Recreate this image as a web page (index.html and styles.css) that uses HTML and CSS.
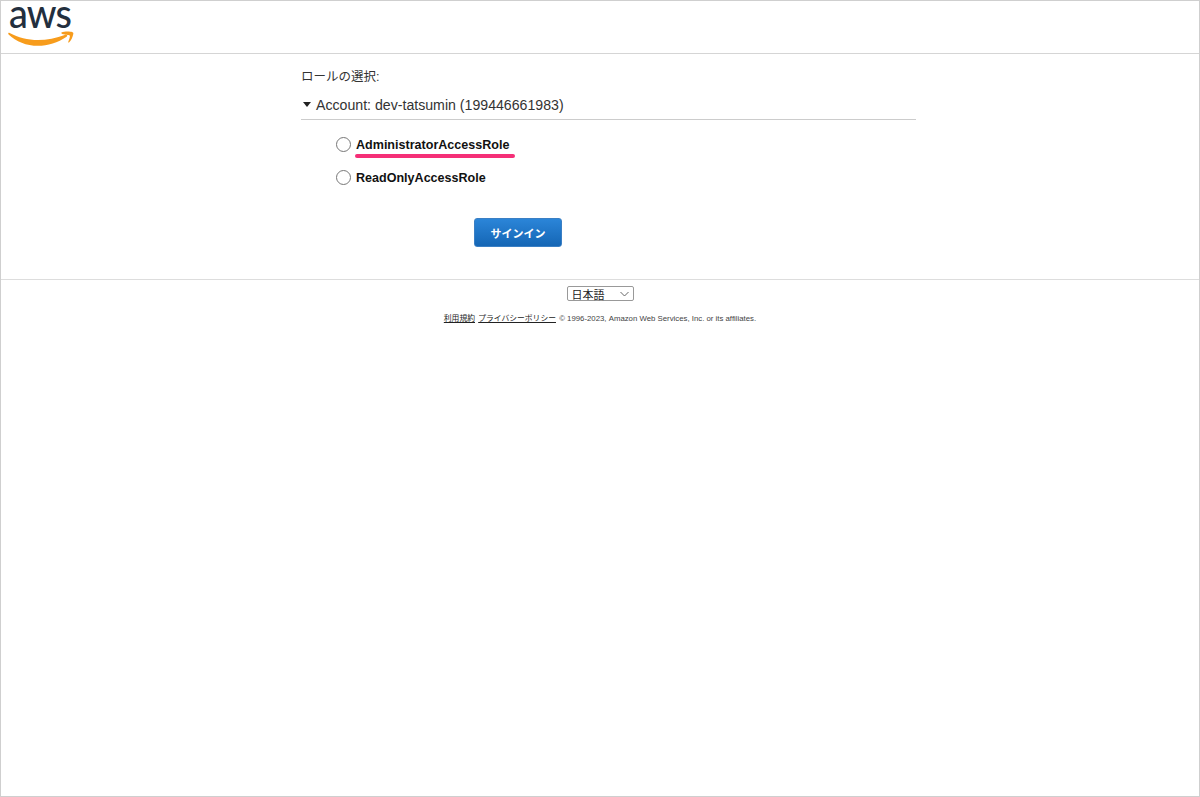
FILE: index.html
```html
<!DOCTYPE html>
<html lang="ja">
<head>
    <meta charset="UTF-8">
    <meta name="viewport" content="width=device-width, initial-scale=1.0">
    <title>Amazon Web Services Sign-In</title>
    <link rel="stylesheet" href="styles.css">
</head>
<body>
    <div class="frame">
        <div class="header">
            <div class="logo">
                <span class="logo-text">aws</span>
                <svg class="logo-smile" width="66" height="16" viewBox="0 0 66 16">
                    <path d="M0.3 2.2C0.6 1.7 1 1.7 1.6 2C10 6.6 20 9 30 9C39 9 48 7.4 57.5 3.8C59 3.2 60 4.6 58.6 5.7C50 11.6 39.5 14.8 30 14.8C18.5 14.8 8 10.4 0.6 3.4C0.2 3 0.1 2.6 0.3 2.2Z" fill="#f79c1c"/>
                    <path d="M53.5 1.6C56.5 0.2 62 0.4 64.5 1.2C65.3 1.5 65.5 2 65.3 3C64.7 6 63.2 9.6 61 11.4C60.5 11.8 60 11.6 60.2 11C61 8.8 62.4 5.4 61.7 4.5C61 3.6 57 4 54.2 2.9C53.4 2.6 53 2 53.5 1.6Z" fill="#f79c1c"/>
                </svg>
            </div>
        </div>
        <div class="content">
            <div class="form-title">ロールの選択:</div>
            <div class="account">
                <span class="arrow"></span>
                <span>Account: dev-tatsumin (199446661983)</span>
            </div>
            <div class="roles">
                <label class="role">
                    <span class="radio"></span>
                    <span class="role-name marked">AdministratorAccessRole</span>
                </label>
                <label class="role">
                    <span class="radio"></span>
                    <span class="role-name">ReadOnlyAccessRole</span>
                </label>
            </div>
            <div class="signin-row">
                <button class="signin" type="button">サインイン</button>
            </div>
        </div>
        <div class="footer">
            <div class="lang">
                <span>日本語</span>
                <svg width="9" height="6" viewBox="0 0 9 6"><path d="M0.5 1L4.5 5L8.5 1" fill="none" stroke="#666" stroke-width="1"/></svg>
            </div>
            <div class="legal">
                <a href="#">利用規約</a>
                <a href="#">プライバシーポリシー</a>
                <span>© 1996-2023, Amazon Web Services, Inc. or its affiliates.</span>
            </div>
        </div>
    </div>
</body>
</html>
```

FILE: styles.css
```css
* {
    box-sizing: border-box;
}
html, body {
    height: 100%;
}
body {
    margin: 0;
    font-family: "Liberation Sans", "Noto Sans CJK JP", sans-serif;
    color: #222;
    background: #fff;
}
.frame {
    height: 797px;
    border: 1px solid #cfcfcf;
}
.header {
    height: 53px;
    border-bottom: 1px solid #d5d5d5;
    padding-left: 7px;
}
.logo {
    position: relative;
    width: 70px;
    height: 52px;
    padding-top: 1px;
}
.logo-text {
    display: block;
    font-family: "Lato", sans-serif;
    font-size: 41px;
    font-weight: 500;
    line-height: 22px;
    letter-spacing: -1px;
    color: #232f3e;
    padding-left: 1px;
    transform: scaleX(0.92);
    transform-origin: left;
}
.logo-smile {
    position: absolute;
    left: 0;
    top: 30px;
}
.content {
    width: 615px;
    margin-left: 300px;
    height: 225px;
    padding-top: 14px;
}
.form-title {
    font-size: 12.5px;
    line-height: 18px;
    color: #333;
}
.account {
    display: flex;
    align-items: center;
    gap: 5px;
    height: 27px;
    margin-top: 7px;
    padding-bottom: 3px;
    border-bottom: 1px solid #ccc;
    font-size: 14.15px;
    color: #333;
}
.arrow {
    width: 0;
    height: 0;
    margin-left: 2px;
    border-left: 4.5px solid transparent;
    border-right: 4.5px solid transparent;
    border-top: 5px solid #222;
}
.roles {
    display: flex;
    flex-direction: column;
    gap: 15px;
    margin-top: 15px;
    padding-left: 35px;
}
.role {
    display: flex;
    align-items: center;
    gap: 5px;
    height: 18px;
}
.radio {
    width: 15px;
    height: 15px;
    border: 1px solid #777;
    border-radius: 50%;
    background: #fff;
}
.role-name {
    position: relative;
    padding-top: 2px;
    font-size: 12.55px;
    font-weight: bold;
    color: #111;
}
.marked::after {
    content: "";
    position: absolute;
    left: -1px;
    right: -6px;
    top: 18px;
    height: 4px;
    border-radius: 2px;
    background: #f52f77;
}
.signin-row {
    margin-top: 32px;
    padding-left: 173px;
}
.signin {
    display: block;
    width: 88px;
    height: 29px;
    padding: 0;
    border: 1px solid #3a7fc4;
    border-radius: 3px;
    background: linear-gradient(#2b85d8, #1566b5);
    color: #fff;
    font-family: inherit;
    font-size: 11px;
    font-weight: bold;
}
.footer {
    border-top: 1px solid #ddd;
    padding-top: 6px;
    text-align: center;
}
.lang {
    display: flex;
    align-items: center;
    justify-content: space-between;
    width: 67px;
    height: 15px;
    margin: 0 auto;
    padding: 0 4px;
    border: 1px solid #999;
    border-radius: 2px;
    font-size: 11px;
    color: #222;
}
.legal {
    margin-top: 13px;
    font-size: 7.8px;
    line-height: 10px;
    color: #444;
}
.legal a {
    color: #222;
    margin-right: 1px;
}
```
